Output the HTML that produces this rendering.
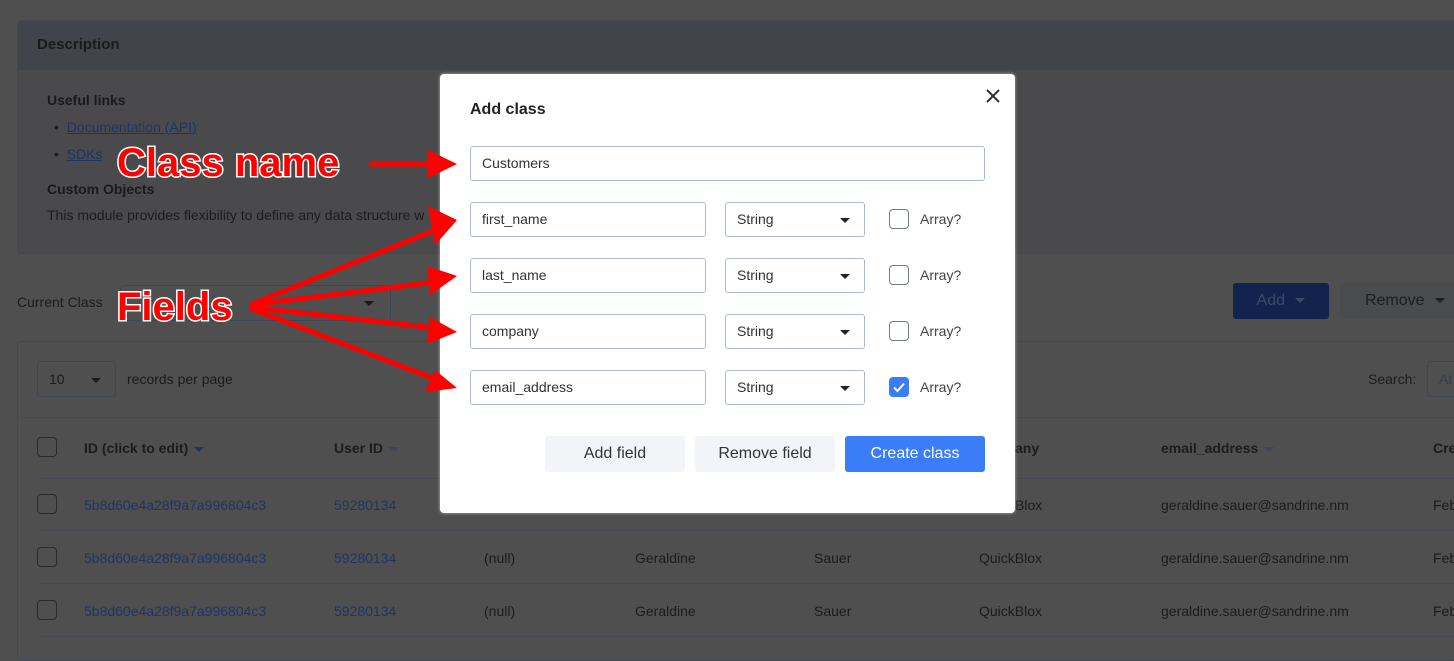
<!DOCTYPE html>
<html><head><meta charset="utf-8"><style>
*{box-sizing:border-box;margin:0;padding:0}
body{width:1454px;height:647px;overflow:hidden;background:#4f4f4f;font-family:"Liberation Sans",sans-serif;position:relative;color:#1e1e1e}
.a{position:absolute;white-space:nowrap}
.t{font-size:14px;color:#1c1c1c}
.lk{color:#1d3566;font-size:14px}
.hl{position:absolute;left:37px;right:0;height:1px;background:#454a55}
.cb{position:absolute;width:20px;height:20px;border:1.5px solid #2a2a2a;border-radius:4px}
.inp{position:absolute;border:1px solid #a9bbd8;border-radius:3px;background:#fff;font-size:14px;color:#333;padding-left:11px;line-height:33px;height:35px}
.sel:after{content:"";position:absolute;right:14px;top:15px;border:5px solid transparent;border-top:5px solid #222;border-bottom:0}
.mcb{position:absolute;width:20px;height:20px;border:1.5px solid #6e7b90;border-radius:4px;background:#fff}
.btn{position:absolute;top:436px;height:36px;width:140px;border-radius:3px;background:#f3f4f7;font-size:16px;color:#333;text-align:center;line-height:36px}
.car{display:inline-block;border:5px solid transparent;border-top:5px solid #1d3566;border-bottom:0;vertical-align:middle;margin-left:6px}
</style></head><body>
<div class="a" style="left:17px;top:20px;width:1440px;height:234px;background:#4a4a4c;border:1px solid #454850;border-radius:4px"></div>
<div class="a" style="left:18px;top:21px;width:1440px;height:49px;background:#41444b;border-radius:4px 4px 0 0"></div>
<div class="a" style="left:37px;top:36px;font-size:15px;font-weight:bold;color:#1a1a1a">Description</div>
<div class="a" style="left:47px;top:92px;font-size:14px;font-weight:bold;color:#1a1a1a">Useful links</div>
<div class="a t" style="left:54px;top:119px">•&nbsp; <span class="lk" style="text-decoration:underline">Documentation (API)</span></div>
<div class="a t" style="left:54px;top:146px">•&nbsp; <span class="lk" style="text-decoration:underline">SDKs</span></div>
<div class="a" style="left:47px;top:181px;font-size:14px;font-weight:bold;color:#1a1a1a">Custom Objects</div>
<div class="a t" style="left:47px;top:207px">This module provides flexibility to define any data structure w</div>
<div class="a t" style="left:17px;top:294px">Current Class</div>
<div class="a" style="left:120px;top:285px;width:271px;height:36px;border:1px solid #3e4555;border-radius:3px"></div>
<div class="a" style="left:364px;top:301px;border:5px solid transparent;border-top:5px solid #1a1a1a;border-bottom:0"></div>
<div class="a" style="left:1233px;top:283px;width:96px;height:36px;background:#12244d;border-radius:3px;color:#3b4a6a;font-size:16px;text-align:center;line-height:36px">Add <span class="car" style="border-top-color:#3b4a6a"></span></div>
<div class="a" style="left:1340px;top:283px;width:120px;height:36px;background:#4a4b4d;border-radius:3px;color:#1e1e1e;font-size:16px;line-height:36px;padding-left:25px">Remove <span class="car" style="border-top-color:#1e1e1e"></span></div>
<div class="a" style="left:17px;top:341px;width:1440px;height:320px;border:1px solid #454850;border-radius:4px"></div>
<div class="a" style="left:37px;top:361px;width:79px;height:36px;border:1px solid #3e4555;border-radius:3px"></div>
<div class="a t" style="left:49px;top:371px">10</div>
<div class="a" style="left:91px;top:378px;border:5px solid transparent;border-top:5px solid #1a1a1a;border-bottom:0"></div>
<div class="a t" style="left:127px;top:371px">records per page</div>
<div class="a t" style="left:1368px;top:371px">Search:</div>
<div class="a" style="left:1427px;top:361px;width:40px;height:36px;border:1px solid #3e4555;border-radius:3px;color:#3a3e48;font-size:14px;padding:9px 0 0 11px">At</div>
<div class="hl" style="left:17px;top:417px"></div>
<div class="cb" style="left:37px;top:437px"></div>
<div class="a" style="left:84px;top:440px;font-size:14px;font-weight:bold;color:#1c1c1c">ID (click to edit)<span class="car"></span></div>
<div class="a" style="left:334px;top:440px;font-size:14px;font-weight:bold;color:#1c1c1c">User ID<span class="car" style="border-top-color:#3d4558"></span></div>
<div class="a" style="left:1015px;top:440px;font-size:14px;font-weight:bold;color:#1c1c1c">any</div>
<div class="a" style="left:1161px;top:440px;font-size:14px;font-weight:bold;color:#1c1c1c">email_address<span class="car" style="border-top-color:#3d4558"></span></div>
<div class="a" style="left:1433px;top:440px;font-size:14px;font-weight:bold;color:#1c1c1c">Cre</div>
<div class="hl" style="top:478px"></div>
<div class="hl" style="top:530px"></div>
<div class="hl" style="top:583px"></div>
<div class="hl" style="top:636px"></div>
<div class="cb" style="left:37px;top:494px"></div>
<div class="cb" style="left:37px;top:547px"></div>
<div class="cb" style="left:37px;top:600px"></div>
<div class="a lk" style="left:84px;top:497px">5b8d60e4a28f9a7a996804c3</div>
<div class="a lk" style="left:84px;top:550px">5b8d60e4a28f9a7a996804c3</div>
<div class="a lk" style="left:84px;top:603px">5b8d60e4a28f9a7a996804c3</div>
<div class="a lk" style="left:334px;top:497px">59280134</div>
<div class="a lk" style="left:334px;top:550px">59280134</div>
<div class="a lk" style="left:334px;top:603px">59280134</div>
<div class="a t" style="left:1015px;top:497px">Blox</div>
<div class="a t" style="left:484px;top:550px">(null)</div><div class="a t" style="left:484px;top:603px">(null)</div>
<div class="a t" style="left:635px;top:550px">Geraldine</div><div class="a t" style="left:635px;top:603px">Geraldine</div>
<div class="a t" style="left:814px;top:550px">Sauer</div><div class="a t" style="left:814px;top:603px">Sauer</div>
<div class="a t" style="left:979px;top:550px">QuickBlox</div><div class="a t" style="left:979px;top:603px">QuickBlox</div>
<div class="a t" style="left:1161px;top:497px">geraldine.sauer@sandrine.nm</div>
<div class="a t" style="left:1161px;top:550px">geraldine.sauer@sandrine.nm</div>
<div class="a t" style="left:1161px;top:603px">geraldine.sauer@sandrine.nm</div>
<div class="a t" style="left:1433px;top:497px">Feb</div><div class="a t" style="left:1433px;top:550px">Feb</div><div class="a t" style="left:1433px;top:603px">Feb</div>
<div class="a" style="left:440px;top:74px;width:575px;height:439px;background:#fff;border-radius:4px;box-shadow:0 0 3px rgba(200,210,230,.8)"></div>
<div class="a" style="left:470px;top:101px;font-size:16px;font-weight:bold;color:#222">Add class</div>
<svg class="a" style="left:985px;top:88px" width="16" height="16"><path d="M2 2L14 14M14 2L2 14" stroke="#333" stroke-width="2"/></svg>
<div class="inp" style="left:470px;top:146px;width:515px">Customers</div>
<div class="inp" style="left:470px;top:202px;width:236px">first_name</div>
<div class="inp" style="left:470px;top:258px;width:236px">last_name</div>
<div class="inp" style="left:470px;top:314px;width:236px">company</div>
<div class="inp" style="left:470px;top:370px;width:236px">email_address</div>
<div class="inp sel" style="left:725px;top:202px;width:140px">String</div>
<div class="inp sel" style="left:725px;top:258px;width:140px">String</div>
<div class="inp sel" style="left:725px;top:314px;width:140px">String</div>
<div class="inp sel" style="left:725px;top:370px;width:140px">String</div>
<div class="mcb" style="left:889px;top:209px"></div>
<div class="mcb" style="left:889px;top:265px"></div>
<div class="mcb" style="left:889px;top:321px"></div>
<div class="a" style="left:889px;top:377px;width:20px;height:20px;background:#3b7cf7;border-radius:4px"><svg width="20" height="20"><path d="M5 10.5L8.5 14L15 6.5" stroke="#fff" stroke-width="2" fill="none"/></svg></div>
<div class="a t" style="left:920px;top:211px;color:#444">Array?</div>
<div class="a t" style="left:920px;top:267px;color:#444">Array?</div>
<div class="a t" style="left:920px;top:323px;color:#444">Array?</div>
<div class="a t" style="left:920px;top:379px;color:#444">Array?</div>
<div class="btn" style="left:545px">Add field</div>
<div class="btn" style="left:695px">Remove field</div>
<div class="btn" style="left:845px;background:#3b7cf7;color:#fff">Create class</div>
<svg class="a" style="left:0;top:0" width="1454" height="647">
<g stroke="#ff0000" stroke-width="5" fill="#ff0000">
<line x1="370" y1="164" x2="432" y2="164"/>
<polygon points="428,150 457,164 428,178" stroke="none"/>
<line x1="250" y1="305" x2="435" y2="230"/>
<line x1="250" y1="305" x2="435" y2="282"/>
<line x1="250" y1="307" x2="435" y2="328"/>
<line x1="250" y1="308" x2="435" y2="379"/>
<polygon points="428,206 457,220 435,245" stroke="none"/>
<polygon points="427,266 457,276 430,295" stroke="none"/>
<polygon points="430,317 457,332 427,344" stroke="none"/>
<polygon points="435,370 457,388 425,392" stroke="none"/>
</g>
<g font-family="Liberation Sans, sans-serif" font-weight="bold" fill="#ff0000" stroke="#fff" stroke-width="3" paint-order="stroke">
<text x="117" y="176" font-size="40">Class name</text>
<text x="117" y="320" font-size="40">Fields</text>
</g>
</svg>
</body></html>
